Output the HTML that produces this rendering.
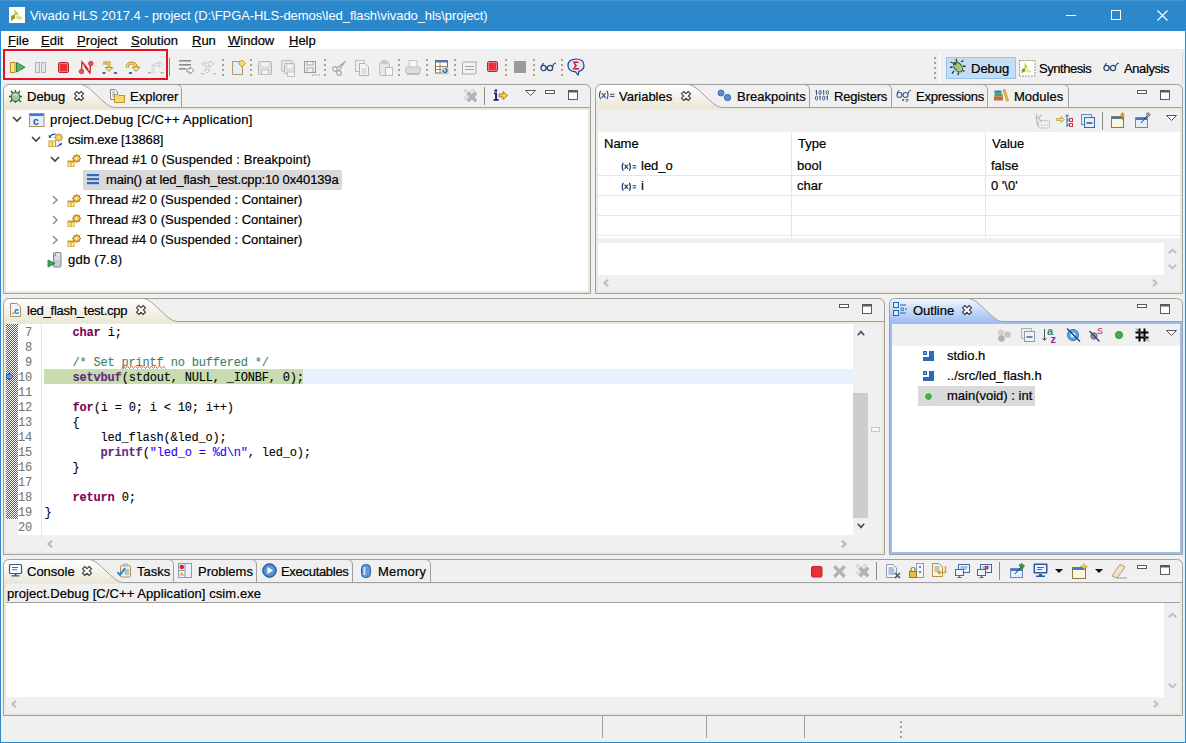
<!DOCTYPE html><html><head><meta charset="utf-8"><style>
html,body{margin:0;padding:0;width:1186px;height:743px;overflow:hidden;background:#f0f0f0;position:relative}
.a{position:absolute}
.t{position:absolute;z-index:3;-webkit-text-stroke:0.2px currentColor;font-family:"Liberation Sans",sans-serif;font-size:13px;line-height:15px;white-space:pre;color:#000}
.m{position:absolute;z-index:3;font-family:"Liberation Mono",monospace;font-size:12px;letter-spacing:-0.2px;-webkit-text-stroke:0.1px currentColor;line-height:15px;white-space:pre;color:#000}
svg{position:absolute;overflow:visible}
</style></head><body>
<div class="a" style="left:0px;top:0px;width:1186px;height:31px;background:#2b88cb"></div>
<div class="a" style="left:0px;top:0px;width:1186px;height:1px;background:#4596d2"></div>
<div class="a" style="left:0px;top:0px;width:1px;height:743px;background:#2b88cb"></div>
<div class="a" style="left:1185px;top:0px;width:1px;height:743px;background:#2b88cb"></div>
<div class="a" style="left:0px;top:742px;width:1186px;height:1px;background:#2b88cb"></div>
<div class="t" style="left:30px;top:8px;font-size:13px;color:#fff;-webkit-text-stroke:0;letter-spacing:-0.07px">Vivado HLS 2017.4 - project (D:\FPGA-HLS-demos\led_flash\vivado_hls\project)</div>
<div class="a" style="left:1px;top:31px;width:1184px;height:18px;background:#fff"></div>
<div class="t" style="left:8px;top:33px;font-size:13px;color:#000;"><u>F</u>ile</div>
<div class="t" style="left:41px;top:33px;font-size:13px;color:#000;"><u>E</u>dit</div>
<div class="t" style="left:77px;top:33px;font-size:13px;color:#000;"><u>P</u>roject</div>
<div class="t" style="left:131px;top:33px;font-size:13px;color:#000;"><u>S</u>olution</div>
<div class="t" style="left:192px;top:33px;font-size:13px;color:#000;"><u>R</u>un</div>
<div class="t" style="left:228px;top:33px;font-size:13px;color:#000;"><u>W</u>indow</div>
<div class="t" style="left:289px;top:33px;font-size:13px;color:#000;"><u>H</u>elp</div>
<div class="a" style="left:1px;top:83px;width:1184px;height:1px;background:#ece9d8"></div>
<svg class="a" style="left:3px;top:84px" width="588" height="210" viewBox="3 84 588 210"><defs><linearGradient id="g3_84" x1="0" y1="0" x2="0" y2="1"><stop offset="0" stop-color="#ffffff"/><stop offset="1" stop-color="#ebe7d6"/></linearGradient></defs><rect x="3" y="84" width="588" height="24" fill="#f0f0f0"/><path d="M3.5,108 L3.5,90.5 Q3.5,84.5 9.5,84.5 L81,84.5 C90,84.5 105,107.5 114,107.5 L114,108 Z" fill="url(#g3_84)"/><path d="M3.5,293.5 L3.5,90.5 Q3.5,84.5 9.5,84.5 L584.5,84.5 Q590.5,84.5 590.5,90.5 L590.5,293.5 Z" fill="none" stroke="#a0a0a0" stroke-width="1"/><path d="M81,84.5 C90,84.5 105,107.5 114,107.5 L590,107.5" fill="none" stroke="#a0a0a0" stroke-width="1"/><path d="M176,84.5 Q181.5,84.5 181.5,90 L181.5,107" fill="none" stroke="#a0a0a0" stroke-width="1"/><rect x="4" y="108" width="586" height="185" fill="none" stroke="#ece9d8" stroke-width="0"/></svg>
<div class="a" style="left:4px;top:108px;width:2px;height:185px;background:#ece9d8"></div>
<div class="a" style="left:588px;top:108px;width:2px;height:185px;background:#ece9d8"></div>
<div class="a" style="left:4px;top:291px;width:586px;height:2px;background:#ece9d8"></div>
<div class="a" style="left:6px;top:108px;width:582px;height:2px;background:#ece9d8"></div>
<svg class="a" style="left:595px;top:84px" width="588" height="210" viewBox="595 84 588 210"><defs><linearGradient id="g595_84" x1="0" y1="0" x2="0" y2="1"><stop offset="0" stop-color="#ffffff"/><stop offset="1" stop-color="#ebe7d6"/></linearGradient></defs><rect x="595" y="84" width="588" height="24" fill="#f0f0f0"/><path d="M595.5,108 L595.5,90.5 Q595.5,84.5 601.5,84.5 L688.5,84.5 C697.5,84.5 712.5,107.5 721.5,107.5 L721.5,108 Z" fill="url(#g595_84)"/><path d="M595.5,293.5 L595.5,90.5 Q595.5,84.5 601.5,84.5 L1176.5,84.5 Q1182.5,84.5 1182.5,90.5 L1182.5,293.5 Z" fill="none" stroke="#a0a0a0" stroke-width="1"/><path d="M688.5,84.5 C697.5,84.5 712.5,107.5 721.5,107.5 L1182,107.5" fill="none" stroke="#a0a0a0" stroke-width="1"/><path d="M804,84.5 Q809.5,84.5 809.5,90 L809.5,107" fill="none" stroke="#a0a0a0" stroke-width="1"/><path d="M886,84.5 Q891.5,84.5 891.5,90 L891.5,107" fill="none" stroke="#a0a0a0" stroke-width="1"/><path d="M982,84.5 Q987.5,84.5 987.5,90 L987.5,107" fill="none" stroke="#a0a0a0" stroke-width="1"/><path d="M1063,84.5 Q1068.5,84.5 1068.5,90 L1068.5,107" fill="none" stroke="#a0a0a0" stroke-width="1"/><rect x="596" y="108" width="586" height="185" fill="none" stroke="#ece9d8" stroke-width="0"/></svg>
<div class="a" style="left:596px;top:108px;width:2px;height:185px;background:#ece9d8"></div>
<div class="a" style="left:1180px;top:108px;width:2px;height:185px;background:#ece9d8"></div>
<div class="a" style="left:596px;top:291px;width:586px;height:2px;background:#ece9d8"></div>
<div class="a" style="left:598px;top:108px;width:582px;height:2px;background:#ece9d8"></div>
<svg class="a" style="left:3px;top:298px" width="882" height="257" viewBox="3 298 882 257"><defs><linearGradient id="g3_298" x1="0" y1="0" x2="0" y2="1"><stop offset="0" stop-color="#ffffff"/><stop offset="1" stop-color="#ebe7d6"/></linearGradient></defs><rect x="3" y="298" width="882" height="24" fill="#f0f0f0"/><path d="M3.5,322 L3.5,304.5 Q3.5,298.5 9.5,298.5 L143.5,298.5 C152.5,298.5 167.5,321.5 176.5,321.5 L176.5,322 Z" fill="url(#g3_298)"/><path d="M3.5,554.5 L3.5,304.5 Q3.5,298.5 9.5,298.5 L878.5,298.5 Q884.5,298.5 884.5,304.5 L884.5,554.5 Z" fill="none" stroke="#a0a0a0" stroke-width="1"/><path d="M143.5,298.5 C152.5,298.5 167.5,321.5 176.5,321.5 L884,321.5" fill="none" stroke="#a0a0a0" stroke-width="1"/><rect x="4" y="322" width="880" height="232" fill="none" stroke="#ece9d8" stroke-width="0"/></svg>
<div class="a" style="left:4px;top:322px;width:2px;height:232px;background:#ece9d8"></div>
<div class="a" style="left:882px;top:322px;width:2px;height:232px;background:#ece9d8"></div>
<div class="a" style="left:4px;top:552px;width:880px;height:2px;background:#ece9d8"></div>
<div class="a" style="left:6px;top:322px;width:876px;height:2px;background:#ece9d8"></div>
<svg class="a" style="left:889px;top:298px" width="294" height="257" viewBox="889 298 294 257"><defs><linearGradient id="g889_298" x1="0" y1="0" x2="0" y2="1"><stop offset="0" stop-color="#f2f7fe"/><stop offset="1" stop-color="#9ebff3"/></linearGradient></defs><rect x="889" y="298" width="294" height="24" fill="#f0f0f0"/><path d="M889.5,322 L889.5,304.5 Q889.5,298.5 895.5,298.5 L969,298.5 C978,298.5 993,321.5 1002,321.5 L1002,322 Z" fill="url(#g889_298)"/><path d="M889.5,554.5 L889.5,304.5 Q889.5,298.5 895.5,298.5 L1176.5,298.5 Q1182.5,298.5 1182.5,304.5 L1182.5,554.5 Z" fill="none" stroke="#a0a0a0" stroke-width="1"/><path d="M969,298.5 C978,298.5 993,321.5 1002,321.5 L1182,321.5" fill="none" stroke="#a0a0a0" stroke-width="1"/><rect x="890" y="322" width="292" height="232" fill="none" stroke="#99bdf4" stroke-width="0"/></svg>
<div class="a" style="left:890px;top:322px;width:2px;height:232px;background:#99bdf4"></div>
<div class="a" style="left:1180px;top:322px;width:2px;height:232px;background:#99bdf4"></div>
<div class="a" style="left:890px;top:552px;width:292px;height:2px;background:#99bdf4"></div>
<div class="a" style="left:892px;top:322px;width:288px;height:2px;background:#99bdf4"></div>
<svg class="a" style="left:3px;top:559px" width="1180" height="157" viewBox="3 559 1180 157"><defs><linearGradient id="g3_559" x1="0" y1="0" x2="0" y2="1"><stop offset="0" stop-color="#ffffff"/><stop offset="1" stop-color="#ebe7d6"/></linearGradient></defs><rect x="3" y="559" width="1180" height="24" fill="#f0f0f0"/><path d="M3.5,583 L3.5,565.5 Q3.5,559.5 9.5,559.5 L89.5,559.5 C98.5,559.5 113.5,582.5 122.5,582.5 L122.5,583 Z" fill="url(#g3_559)"/><path d="M3.5,715.5 L3.5,565.5 Q3.5,559.5 9.5,559.5 L1176.5,559.5 Q1182.5,559.5 1182.5,565.5 L1182.5,715.5 Z" fill="none" stroke="#a0a0a0" stroke-width="1"/><path d="M89.5,559.5 C98.5,559.5 113.5,582.5 122.5,582.5 L1182,582.5" fill="none" stroke="#a0a0a0" stroke-width="1"/><path d="M168,559.5 Q173.5,559.5 173.5,565 L173.5,582" fill="none" stroke="#a0a0a0" stroke-width="1"/><path d="M251,559.5 Q256.5,559.5 256.5,565 L256.5,582" fill="none" stroke="#a0a0a0" stroke-width="1"/><path d="M347,559.5 Q352.5,559.5 352.5,565 L352.5,582" fill="none" stroke="#a0a0a0" stroke-width="1"/><path d="M425,559.5 Q430.5,559.5 430.5,565 L430.5,582" fill="none" stroke="#a0a0a0" stroke-width="1"/><rect x="4" y="583" width="1178" height="132" fill="none" stroke="#ece9d8" stroke-width="0"/></svg>
<div class="a" style="left:4px;top:583px;width:2px;height:132px;background:#ece9d8"></div>
<div class="a" style="left:1180px;top:583px;width:2px;height:132px;background:#ece9d8"></div>
<div class="a" style="left:4px;top:713px;width:1178px;height:2px;background:#ece9d8"></div>
<div class="a" style="left:6px;top:583px;width:1174px;height:1px;background:#ece9d8"></div>
<div class="a" style="left:6px;top:110px;width:582px;height:181px;background:#fff"></div>
<div class="a" style="left:598px;top:132px;width:582px;height:106px;background:#fff"></div>
<div class="a" style="left:598px;top:243px;width:566px;height:32px;background:#fff"></div>
<div class="a" style="left:6px;top:324px;width:12px;height:195px;background-image:repeating-conic-gradient(#0a6fe0 0 25%, #fff 0 50%);background-size:2px 2px"></div>
<div class="a" style="left:6px;top:519px;width:12px;height:33px;background:#f0f0f0"></div>
<div class="a" style="left:18px;top:324px;width:23px;height:211px;background:#fff"></div>
<div class="a" style="left:41px;top:324px;width:1px;height:211px;background:#e8e8e8"></div>
<div class="a" style="left:42px;top:324px;width:811px;height:211px;background:#fff"></div>
<div class="a" style="left:892px;top:346px;width:288px;height:206px;background:#fff"></div>
<div class="a" style="left:6px;top:584px;width:1174px;height:18px;background:#f0f0f0"></div>
<div class="a" style="left:6px;top:602px;width:1174px;height:1px;background:#a0a0a0"></div>
<div class="a" style="left:6px;top:603px;width:1158px;height:94px;background:#fff"></div>
<div class="t" style="left:971px;top:61px;font-size:13px;color:#000;">Debug</div>
<div class="t" style="left:1039px;top:61px;font-size:13px;color:#000;letter-spacing:-0.45px">Synthesis</div>
<div class="t" style="left:1124px;top:61px;font-size:13px;color:#000;letter-spacing:-0.4px">Analysis</div>
<div class="t" style="left:27px;top:89px;font-size:13px;color:#000;">Debug</div>
<div class="t" style="left:130px;top:89px;font-size:13px;color:#000;">Explorer</div>
<div class="t" style="left:50px;top:112px;font-size:13px;color:#000;letter-spacing:0.2px">project.Debug [C/C++ Application]</div>
<div class="t" style="left:68px;top:132px;font-size:13px;color:#000;letter-spacing:-0.2px">csim.exe [13868]</div>
<div class="t" style="left:87px;top:152px;font-size:13px;color:#000;letter-spacing:0.08px">Thread #1 0 (Suspended : Breakpoint)</div>
<div class="a" style="left:83px;top:170px;width:259px;height:20px;background:#d9d9d9"></div>
<div class="t" style="left:106px;top:172px;font-size:13px;color:#000;letter-spacing:-0.15px">main() at led_flash_test.cpp:10 0x40139a</div>
<div class="t" style="left:87px;top:192px;font-size:13px;color:#000;">Thread #2 0 (Suspended : Container)</div>
<div class="t" style="left:87px;top:212px;font-size:13px;color:#000;">Thread #3 0 (Suspended : Container)</div>
<div class="t" style="left:87px;top:232px;font-size:13px;color:#000;">Thread #4 0 (Suspended : Container)</div>
<div class="t" style="left:68px;top:252px;font-size:13px;color:#000;letter-spacing:0.25px">gdb (7.8)</div>
<div class="t" style="left:619px;top:89px;font-size:13px;color:#000;">Variables</div>
<div class="t" style="left:737px;top:89px;font-size:13px;color:#000;">Breakpoints</div>
<div class="t" style="left:834px;top:89px;font-size:13px;color:#000;letter-spacing:-0.2px">Registers</div>
<div class="t" style="left:916px;top:89px;font-size:13px;color:#000;letter-spacing:-0.25px">Expressions</div>
<div class="t" style="left:1014px;top:89px;font-size:13px;color:#000;">Modules</div>
<div class="t" style="left:604px;top:136px;font-size:13px;color:#000;">Name</div>
<div class="t" style="left:798px;top:136px;font-size:13px;color:#000;">Type</div>
<div class="t" style="left:992px;top:136px;font-size:13px;color:#000;">Value</div>
<div class="t" style="left:641px;top:158px;font-size:13px;color:#000;">led_o</div>
<div class="t" style="left:797px;top:158px;font-size:13px;color:#000;">bool</div>
<div class="t" style="left:991px;top:158px;font-size:13px;color:#000;">false</div>
<div class="t" style="left:641px;top:178px;font-size:13px;color:#000;">i</div>
<div class="t" style="left:797px;top:178px;font-size:13px;color:#000;">char</div>
<div class="t" style="left:991px;top:178px;font-size:13px;color:#000;">0 '\0'</div>
<div class="t" style="left:27px;top:303px;font-size:13px;color:#000;letter-spacing:-0.25px">led_flash_test.cpp</div>
<div class="t" style="left:913px;top:303px;font-size:13px;color:#000;">Outline</div>
<div class="a" style="left:918px;top:386px;width:117px;height:20px;background:#d9d9d9"></div>
<div class="t" style="left:947px;top:348px;font-size:13px;color:#000;">stdio.h</div>
<div class="t" style="left:947px;top:368px;font-size:13px;color:#000;">../src/led_flash.h</div>
<div class="t" style="left:947px;top:388px;font-size:13px;color:#000;">main(void) : int</div>
<div class="t" style="left:27px;top:564px;font-size:13px;color:#000;">Console</div>
<div class="t" style="left:137px;top:564px;font-size:13px;color:#000;">Tasks</div>
<div class="t" style="left:198px;top:564px;font-size:13px;color:#000;">Problems</div>
<div class="t" style="left:281px;top:564px;font-size:13px;color:#000;letter-spacing:-0.3px">Executables</div>
<div class="t" style="left:378px;top:564px;font-size:13px;color:#000;letter-spacing:0.2px">Memory</div>
<div class="t" style="left:7px;top:586px;font-size:13px;color:#000;letter-spacing:0.08px">project.Debug [C/C++ Application] csim.exe</div>
<div class="a" style="left:303px;top:369px;width:550px;height:15px;background:#e8f2fe"></div>
<div class="a" style="left:44px;top:369px;width:259px;height:15px;background:#c7ddb0"></div>
<div class="m" style="left:18px;top:326px;width:14px;text-align:right;color:#787878">7</div>
<div class="m" style="left:44.6px;top:326px">    <span style="color:#7f0055;font-weight:bold">char</span> i;</div>
<div class="m" style="left:18px;top:341px;width:14px;text-align:right;color:#787878">8</div>
<div class="m" style="left:18px;top:356px;width:14px;text-align:right;color:#787878">9</div>
<div class="m" style="left:44.6px;top:356px">    <span style="color:#3f7f5f">/* Set printf no buffered */</span></div>
<div class="m" style="left:18px;top:371px;width:14px;text-align:right;color:#787878">10</div>
<div class="m" style="left:44.6px;top:371px">    <span style="color:#642880;font-weight:bold">setvbuf</span>(stdout, NULL, _IONBF, 0);</div>
<div class="m" style="left:18px;top:386px;width:14px;text-align:right;color:#787878">11</div>
<div class="m" style="left:18px;top:401px;width:14px;text-align:right;color:#787878">12</div>
<div class="m" style="left:44.6px;top:401px">    <span style="color:#7f0055;font-weight:bold">for</span>(i = 0; i &lt; 10; i++)</div>
<div class="m" style="left:18px;top:416px;width:14px;text-align:right;color:#787878">13</div>
<div class="m" style="left:44.6px;top:416px">    {</div>
<div class="m" style="left:18px;top:431px;width:14px;text-align:right;color:#787878">14</div>
<div class="m" style="left:44.6px;top:431px">        led_flash(&amp;led_o);</div>
<div class="m" style="left:18px;top:446px;width:14px;text-align:right;color:#787878">15</div>
<div class="m" style="left:44.6px;top:446px">        <span style="color:#642880;font-weight:bold">printf</span>(<span style="color:#2a00ff">"led_o = %d\n"</span>, led_o);</div>
<div class="m" style="left:18px;top:461px;width:14px;text-align:right;color:#787878">16</div>
<div class="m" style="left:44.6px;top:461px">    }</div>
<div class="m" style="left:18px;top:476px;width:14px;text-align:right;color:#787878">17</div>
<div class="m" style="left:18px;top:491px;width:14px;text-align:right;color:#787878">18</div>
<div class="m" style="left:44.6px;top:491px">    <span style="color:#7f0055;font-weight:bold">return</span> 0;</div>
<div class="m" style="left:18px;top:506px;width:14px;text-align:right;color:#787878">19</div>
<div class="m" style="left:44.6px;top:506px">}</div>
<div class="m" style="left:18px;top:521px;width:14px;text-align:right;color:#787878">20</div>
<svg class="a" style="left:9px;top:7px" width="16" height="16" viewBox="0 0 16 16"><rect width="16" height="16" fill="#fff"/><path d="M5,2 L9,6 L9,8 L6,8 Z" fill="#c9c743"/><path d="M2,14 L6,8 L6,11 Z" fill="#8d8b1f"/><path d="M2,14 L2,9 L6,7 L6,11 Z" fill="#9c9a25"/><path d="M6,11 L9,8 L14,11 L10,13 Z" fill="#dbe08a"/></svg>
<div class="a" style="left:1066px;top:15px;width:10px;height:1px;background:#fff"></div>
<div class="a" style="left:1111px;top:10px;width:10px;height:10px;border:1px solid #fff;box-sizing:border-box"></div>
<svg class="a" style="left:1157px;top:10px" width="11" height="11" viewBox="0 0 11 11"><path d="M0.5,0.5 L10.5,10.5 M10.5,0.5 L0.5,10.5" stroke="#fff" stroke-width="1.1"/></svg>
<div class="a" style="left:3px;top:49px;width:165px;height:31px;border:2px solid #e81123;box-sizing:border-box"></div>
<svg class="a" style="left:10px;top:62px" width="16" height="11" viewBox="0 0 16 11"><rect x="0.5" y="0.5" width="4.5" height="10" fill="#f7e58a" stroke="#b48f1e"/><path d="M6.5,0.5 L15,5.3 L6.5,10 Z" fill="#5cb85c" stroke="#2e7d4a"/></svg>
<svg class="a" style="left:35px;top:62px" width="11" height="11" viewBox="0 0 11 11"><rect x="0.5" y="0.5" width="4" height="10" fill="#e6e6e6" stroke="#b3b3b3"/><rect x="6.5" y="0.5" width="4" height="10" fill="#e6e6e6" stroke="#b3b3b3"/></svg>
<svg class="a" style="left:58px;top:62px" width="11" height="11" viewBox="0 0 11 11"><rect x="0.5" y="0.5" width="10" height="10" rx="1.5" fill="#e8303a" stroke="#c8202a"/><rect x="1.5" y="1.5" width="8" height="8" fill="none" stroke="#f58a90" stroke-width="0.8"/></svg>
<svg class="a" style="left:79px;top:60px" width="15" height="15" viewBox="0 0 15 15"><path d="M2.5,10.5 L3,2 L8,8 L6.5,7.5 L11,13 L11.5,4" fill="none" stroke="#c8202a" stroke-width="1.3"/><circle cx="2.5" cy="11.5" r="2.3" fill="#f0505a" stroke="#c8202a" stroke-width="0.7"/><circle cx="11.8" cy="3.5" r="2.3" fill="#f0505a" stroke="#c8202a" stroke-width="0.7"/></svg>
<svg class="a" style="left:102px;top:61px" width="16" height="13" viewBox="0 0 16 13"><path d="M1,2 L7,2 L7,6.5" fill="none" stroke="#b48f1e" stroke-width="3"/><path d="M1,2 L7,2 L7,6.5" fill="none" stroke="#fbe59a" stroke-width="1.2"/><path d="M3.2,6.5 L10.8,6.5 L7,10.5 Z" fill="#fbe59a" stroke="#b48f1e"/><ellipse cx="2" cy="12" rx="1.8" ry="1.1" fill="#2f5a9a"/><ellipse cx="13.5" cy="12" rx="1.8" ry="1.1" fill="#2f5a9a"/></svg>
<svg class="a" style="left:125px;top:61px" width="16" height="13" viewBox="0 0 16 13"><path d="M2,7 C2,0.5 11,0.5 11,6" fill="none" stroke="#b48f1e" stroke-width="3"/><path d="M2,7 C2,0.5 11,0.5 11,6" fill="none" stroke="#fbe59a" stroke-width="1.2"/><path d="M7.2,6 L14.8,6 L11,10.5 Z" fill="#fbe59a" stroke="#b48f1e"/><ellipse cx="5.5" cy="12" rx="1.8" ry="1.1" fill="#2f5a9a"/></svg>
<svg class="a" style="left:148px;top:61px" width="16" height="13" viewBox="0 0 16 13"><path d="M5,12 L5,6 C5,4 7,3.5 9,3.5 L11,3.5" fill="none" stroke="#c8c8c8" stroke-width="2.6"/><path d="M5,12 L5,6 C5,4 7,3.5 9,3.5 L11,3.5" fill="none" stroke="#f6f6f6" stroke-width="1"/><path d="M11,0.5 L15,3.5 L11,6.5 Z" fill="#f6f6f6" stroke="#c8c8c8"/><rect x="0" y="11" width="3" height="1.5" fill="#b0b0b0"/><rect x="12.5" y="11" width="3" height="1.5" fill="#b0b0b0"/></svg>
<div class="a" style="left:169px;top:58px;width:1px;height:18px;background:#8c8c8c"></div>
<svg class="a" style="left:179px;top:60px" width="16" height="16" viewBox="0 0 16 16"><rect x="0" y="0" width="12" height="1.6" fill="#8e8e8e"/><rect x="0" y="4" width="12" height="1.6" fill="#8e8e8e"/><rect x="0" y="8" width="7" height="1.6" fill="#8e8e8e"/><path d="M8,9 L11,9 L11,7 L15,10.5 L11,14 L11,12 L8,12 Z" fill="#fff" stroke="#8e8e8e"/></svg>
<svg class="a" style="left:201px;top:60px" width="16" height="16" viewBox="0 0 16 16"><path d="M1,3 L9,3 L9,1 L13,4 L9,7 L9,5 L7,5 L7,10 L9,10 L6,13 L3,10 L5,10 L5,5 L1,5 Z" fill="#f8f8f8" stroke="#c4c4c4"/><rect x="0" y="13" width="3" height="1.4" fill="#bbb"/><rect x="12" y="13" width="3" height="1.4" fill="#bbb"/></svg>
<svg class="a" style="left:222px;top:59px" width="2" height="17" viewBox="0 0 2 17"><rect x="0" y="0" width="2" height="2" fill="#a8a390"/><rect x="0" y="5" width="2" height="2" fill="#a8a390"/><rect x="0" y="10" width="2" height="2" fill="#a8a390"/><rect x="0" y="15" width="2" height="2" fill="#a8a390"/></svg>
<svg class="a" style="left:232px;top:60px" width="14" height="16" viewBox="0 0 14 16"><path d="M0.5,1.5 L8,1.5 L10.5,4 L10.5,14.5 L0.5,14.5 Z" fill="#e4eefb" stroke="#b49a5a"/><path d="M10,0 L13.5,3.5 L10,7 L6.5,3.5 Z" fill="#f5d96a" stroke="#b48f1e" stroke-width="0.8"/></svg>
<svg class="a" style="left:250px;top:59px" width="2" height="17" viewBox="0 0 2 17"><rect x="0" y="0" width="2" height="2" fill="#a8a390"/><rect x="0" y="5" width="2" height="2" fill="#a8a390"/><rect x="0" y="10" width="2" height="2" fill="#a8a390"/><rect x="0" y="15" width="2" height="2" fill="#a8a390"/></svg>
<svg class="a" style="left:258px;top:61px" width="15" height="15" viewBox="0 0 15 15"><rect x="0.5" y="0.5" width="13" height="13" rx="1" fill="#e3e3e3" stroke="#b8b8b8"/><rect x="3" y="1" width="8" height="5" fill="#f4f4f4" stroke="#c8c8c8" stroke-width="0.6"/><rect x="3.5" y="9" width="7" height="4.5" fill="#f4f4f4" stroke="#b8b8b8" stroke-width="0.8"/></svg>
<svg class="a" style="left:281px;top:60px" width="16" height="16" viewBox="0 0 16 16"><g transform="translate(0,0) scale(0.85)"><rect x="0.5" y="0.5" width="13" height="13" rx="1" fill="#e3e3e3" stroke="#b8b8b8"/></g><g transform="translate(3,3)"><rect x="0.5" y="0.5" width="10" height="10" rx="1" fill="#e3e3e3" stroke="#b8b8b8"/><rect x="3" y="1" width="6" height="5" fill="#f4f4f4" stroke="#c8c8c8" stroke-width="0.6"/><rect x="3.5" y="9" width="7" height="4.5" fill="#f4f4f4" stroke="#b8b8b8" stroke-width="0.8"/></g></svg>
<svg class="a" style="left:304px;top:61px" width="16" height="16" viewBox="0 0 16 16"><rect x="0.5" y="0.5" width="11" height="11" fill="none" stroke="#999" stroke-width="1"/><rect x="3" y="7" width="6" height="4.5" fill="none" stroke="#999" stroke-width="0.8"/><rect x="3" y="0.5" width="6" height="3.5" fill="none" stroke="#999" stroke-width="0.8"/><path d="M8,14 h2 M11,14 h2 M14,14 h2" stroke="#999" stroke-width="1"/></svg>
<svg class="a" style="left:324px;top:59px" width="2" height="17" viewBox="0 0 2 17"><rect x="0" y="0" width="2" height="2" fill="#a8a390"/><rect x="0" y="5" width="2" height="2" fill="#a8a390"/><rect x="0" y="10" width="2" height="2" fill="#a8a390"/><rect x="0" y="15" width="2" height="2" fill="#a8a390"/></svg>
<svg class="a" style="left:332px;top:60px" width="15" height="16" viewBox="0 0 15 16"><circle cx="3" cy="9" r="2.3" fill="none" stroke="#a8a8a8" stroke-width="1.2"/><circle cx="7" cy="13" r="2.3" fill="none" stroke="#a8a8a8" stroke-width="1.2"/><path d="M5,8 L14,1 M7,10.5 L12,3" stroke="#a8a8a8" stroke-width="1.3"/></svg>
<svg class="a" style="left:355px;top:60px" width="15" height="16" viewBox="0 0 15 16"><rect x="0.5" y="0.5" width="9" height="11" fill="#f0f0f0" stroke="#bdbdbd"/><path d="M4.5,3.5 L10,3.5 L13.5,7 L13.5,15.5 L4.5,15.5 Z" fill="#f4f4f4" stroke="#b3b3b3"/><path d="M6.5,9 h5 M6.5,11 h5 M6.5,13 h5" stroke="#c0c0c0" stroke-width="0.9"/></svg>
<svg class="a" style="left:379px;top:60px" width="14" height="16" viewBox="0 0 14 16"><rect x="0.5" y="2.5" width="10" height="13" rx="1" fill="#e6e6e6" stroke="#c0c0c0"/><rect x="3" y="0.5" width="5" height="3" fill="#d0d0d0" stroke="#c0c0c0" stroke-width="0.8"/><rect x="6.5" y="7.5" width="7" height="8" fill="#f6f6f6" stroke="#bdbdbd"/></svg>
<svg class="a" style="left:398px;top:59px" width="2" height="17" viewBox="0 0 2 17"><rect x="0" y="0" width="2" height="2" fill="#a8a390"/><rect x="0" y="5" width="2" height="2" fill="#a8a390"/><rect x="0" y="10" width="2" height="2" fill="#a8a390"/><rect x="0" y="15" width="2" height="2" fill="#a8a390"/></svg>
<svg class="a" style="left:405px;top:60px" width="16" height="16" viewBox="0 0 16 16"><rect x="4" y="0.5" width="8" height="7" fill="#f6f6f6" stroke="#c4c4c4"/><rect x="0.5" y="7" width="15" height="6.5" rx="2" fill="#dcdcdc" stroke="#c0c0c0"/><rect x="2" y="13" width="12" height="2" fill="#bcbcbc"/></svg>
<svg class="a" style="left:426px;top:59px" width="2" height="17" viewBox="0 0 2 17"><rect x="0" y="0" width="2" height="2" fill="#a8a390"/><rect x="0" y="5" width="2" height="2" fill="#a8a390"/><rect x="0" y="10" width="2" height="2" fill="#a8a390"/><rect x="0" y="15" width="2" height="2" fill="#a8a390"/></svg>
<svg class="a" style="left:435px;top:60px" width="14" height="15" viewBox="0 0 14 15"><rect x="0.5" y="0.5" width="12" height="12.5" fill="#fff" stroke="#8b6b2b"/><rect x="0.5" y="0.5" width="12" height="2" fill="#3d78c9"/><path d="M5,3 V13 M1,6.5 H12 M1,9.5 H6" stroke="#8b6b2b" stroke-width="0.8"/><rect x="6.5" y="7.5" width="7" height="7" fill="#a8d4f4"/><path d="M8,10.5 A2,2 0 1 0 10,8.5" fill="none" stroke="#333" stroke-width="1"/></svg>
<svg class="a" style="left:454px;top:59px" width="2" height="17" viewBox="0 0 2 17"><rect x="0" y="0" width="2" height="2" fill="#a8a390"/><rect x="0" y="5" width="2" height="2" fill="#a8a390"/><rect x="0" y="10" width="2" height="2" fill="#a8a390"/><rect x="0" y="15" width="2" height="2" fill="#a8a390"/></svg>
<svg class="a" style="left:462px;top:61px" width="15" height="14" viewBox="0 0 15 14"><path d="M0.5,1.5 L2,0.5 L4,1.5 L6,0.5 L8,1.5 L10,0.5 L12,1.5 L14,0.5 L14,12.5 L12,13.5 L10,12.5 L8,13.5 L6,12.5 L4,13.5 L2,12.5 L0.5,13.5 Z" fill="#f2f2f2" stroke="#a8a8a8"/><path d="M3,5.5 h9 M3,8.5 h9" stroke="#a0a0a0"/></svg>
<svg class="a" style="left:487px;top:61px" width="11" height="11" viewBox="0 0 11 11"><rect x="0.5" y="0.5" width="10" height="10" rx="1.5" fill="#e8303a" stroke="#c8202a"/><rect x="1.5" y="1.5" width="8" height="8" fill="none" stroke="#f58a90" stroke-width="0.8"/></svg>
<svg class="a" style="left:505px;top:59px" width="2" height="17" viewBox="0 0 2 17"><rect x="0" y="0" width="2" height="2" fill="#a8a390"/><rect x="0" y="5" width="2" height="2" fill="#a8a390"/><rect x="0" y="10" width="2" height="2" fill="#a8a390"/><rect x="0" y="15" width="2" height="2" fill="#a8a390"/></svg>
<div class="a" style="left:514px;top:61px;width:12px;height:12px;background:#9b9b9b"></div>
<svg class="a" style="left:533px;top:59px" width="2" height="17" viewBox="0 0 2 17"><rect x="0" y="0" width="2" height="2" fill="#a8a390"/><rect x="0" y="5" width="2" height="2" fill="#a8a390"/><rect x="0" y="10" width="2" height="2" fill="#a8a390"/><rect x="0" y="15" width="2" height="2" fill="#a8a390"/></svg>
<svg class="a" style="left:540px;top:62px" width="17" height="10" viewBox="0 0 17 10"><circle cx="3.5" cy="6" r="2.6" fill="none" stroke="#28497a" stroke-width="1.3"/><circle cx="10" cy="6" r="2.6" fill="none" stroke="#28497a" stroke-width="1.3"/><path d="M6,6 Q6.8,4.5 7.5,6 M1,5 L3.5,1 M12.5,5 Q13,1.5 16,1" fill="none" stroke="#28497a" stroke-width="1.2"/></svg>
<svg class="a" style="left:561px;top:59px" width="2" height="17" viewBox="0 0 2 17"><rect x="0" y="0" width="2" height="2" fill="#a8a390"/><rect x="0" y="5" width="2" height="2" fill="#a8a390"/><rect x="0" y="10" width="2" height="2" fill="#a8a390"/><rect x="0" y="15" width="2" height="2" fill="#a8a390"/></svg>
<svg class="a" style="left:567px;top:58px" width="18" height="18" viewBox="0 0 18 18"><path d="M9,1 C14,1 17,3.5 17,7.5 C17,10.5 15,12.5 12,13.3 L11,17 L8.5,13.8 C4,13.5 1,11 1,7.5 C1,3.5 4,1 9,1 Z" fill="#dbe8f6" stroke="#1f3f9a" stroke-width="1.2"/><path d="M5.5,3.5 L11.5,3.5 L11.5,5 L8,5 L10,7.5 L8,10 L12,10 L12,11.5 L5.5,11.5 L8,7.5 Z" fill="#e8101a"/></svg>
<svg class="a" style="left:934px;top:57px" width="2" height="21" viewBox="0 0 2 21"><rect x="0" y="0" width="2" height="2" fill="#a8a390"/><rect x="0" y="5" width="2" height="2" fill="#a8a390"/><rect x="0" y="10" width="2" height="2" fill="#a8a390"/><rect x="0" y="15" width="2" height="2" fill="#a8a390"/><rect x="0" y="20" width="2" height="2" fill="#a8a390"/></svg>
<div class="a" style="left:939px;top:52px;width:1px;height:31px;background:#fff"></div>
<div class="a" style="left:946px;top:57px;width:70px;height:22px;background:#c4ddf3;border:1px solid #94c4ee;box-sizing:border-box"></div>
<svg class="a" style="left:8px;top:89px" width="15" height="15" viewBox="0 0 15 15"><path d="M7.5,1 L7.5,3 M3,2 L5,4.5 M12,2 L10,4.5 M1,7.5 L3.5,7.5 M14,7.5 L11.5,7.5 M2,13 L4.5,10.5 M13,13 L10.5,10.5 M7.5,14 L7.5,12" stroke="#2d5a3a" stroke-width="1.3"/><ellipse cx="7.5" cy="7.8" rx="4.3" ry="4.6" fill="#9cc99a" stroke="#3b6e4a" stroke-width="1.1"/><path d="M5.5,6 Q7.5,5 9.5,7" stroke="#e3f3df" stroke-width="1" fill="none"/></svg>
<svg class="a" style="left:74px;top:91px" width="10" height="10" viewBox="0 0 10 10"><path d="M0.5,2.8 L2.8,0.5 L5,2.7 L7.2,0.5 L9.5,2.8 L7.3,5 L9.5,7.2 L7.2,9.5 L5,7.3 L2.8,9.5 L0.5,7.2 L2.7,5 Z" fill="#fff" stroke="#3c3c3c" stroke-width="1.1" stroke-linejoin="miter"/></svg>
<svg class="a" style="left:110px;top:89px" width="16" height="14" viewBox="0 0 16 14"><path d="M0.5,0.5 L5,0.5 L7.5,3 L7.5,10.5 L0.5,10.5 Z" fill="#f4f6fa" stroke="#8a8a8a"/><path d="M2,3 h3 M2,5 h3 M2,7 h3" stroke="#6a8ac0" stroke-width="0.8"/><path d="M4.5,5.5 L8,5.5 L9,6.5 L14.5,6.5 L14.5,13.5 L4.5,13.5 Z" fill="#f7d978" stroke="#c0902a"/></svg>
<svg class="a" style="left:463px;top:88px" width="16" height="16" viewBox="0 0 16 16"><path d="M1,3 L3,1 L6.5,4.5 L10,1 L12,3 L8.5,6.5 L12,10 L10,12 L6.5,8.5 L3,12 L1,10 L4.5,6.5 Z" fill="#e6e6e6" stroke="#c8c8c8" stroke-width="0.8"/><path d="M4,6 L6,4 L9,7 L12,4 L14,6 L11,9 L14,12 L12,14 L9,11 L6,14 L4,12 L7,9 Z" fill="#b4b4b4" stroke="#a0a0a0" stroke-width="0.6"/></svg>
<div class="a" style="left:484px;top:87px;width:1px;height:18px;background:#8c8c8c"></div>
<svg class="a" style="left:492px;top:89px" width="17" height="13" viewBox="0 0 17 13"><path d="M2,3.5 h3 v6.5 h1.6 v1.8 h-5 v-1.8 h1.5 v-4.8 h-1.1 Z" fill="#1a1a8a"/><rect x="2.5" y="0.5" width="2.6" height="2.2" fill="#1a1a8a"/><path d="M7,5 L11,5 L11,2.5 L15.5,6.5 L11,10.5 L11,8 L7,8 Z" fill="#e8d84a" stroke="#9a7a1a" stroke-width="0.9"/></svg>
<svg class="a" style="left:525px;top:90px" width="11" height="6" viewBox="0 0 11 6"><path d="M0.5,0.5 L10.5,0.5 L5.5,5.5 Z" fill="#fff" stroke="#555" stroke-width="1"/></svg>
<svg class="a" style="left:545px;top:90px" width="10" height="4" viewBox="0 0 10 4"><rect x="0.5" y="0.5" width="9" height="3" fill="#fff" stroke="#5a5a5a"/></svg>
<svg class="a" style="left:568px;top:90px" width="10" height="10" viewBox="0 0 10 10"><rect x="0.5" y="0.5" width="9" height="9" fill="#fff" stroke="#5a5a5a"/><rect x="1" y="1" width="8" height="1.5" fill="#5a5a5a"/></svg>
<svg class="a" style="left:598px;top:90px" width="18" height="11" viewBox="0 0 18 11"><path d="M2.6,0.8 Q0.4,5 2.6,9.2 M8.9,0.8 Q11.1,5 8.9,9.2" fill="none" stroke="#2f4f80" stroke-width="1.1"/><path d="M3.8,3 L7.6,7.8 M7.6,3 L3.8,7.8" stroke="#2f4f80" stroke-width="1.15"/><path d="M12,4.3 h4.5 M12,6.4 h4.5" stroke="#2f4f80" stroke-width="1"/></svg>
<svg class="a" style="left:681px;top:91px" width="10" height="10" viewBox="0 0 10 10"><path d="M0.5,2.8 L2.8,0.5 L5,2.7 L7.2,0.5 L9.5,2.8 L7.3,5 L9.5,7.2 L7.2,9.5 L5,7.3 L2.8,9.5 L0.5,7.2 L2.7,5 Z" fill="#fff" stroke="#3c3c3c" stroke-width="1.1" stroke-linejoin="miter"/></svg>
<svg class="a" style="left:717px;top:89px" width="15" height="13" viewBox="0 0 15 13"><circle cx="4" cy="4" r="3" fill="#5b8fc8" stroke="#2f5f9a" stroke-width="0.8"/><circle cx="10.5" cy="8.5" r="3.2" fill="#5b8fc8" stroke="#2f5f9a" stroke-width="0.8"/></svg>
<svg class="a" style="left:815px;top:90px" width="15" height="11" viewBox="0 0 15 11"><path d="M1.5,0.3 V4.7 M0.5,1.2 L1.5,0.3" stroke="#2f4f80" stroke-width="1" fill="none"/><ellipse cx="5.1" cy="2.5" rx="1.15" ry="2" fill="none" stroke="#2f4f80" stroke-width="0.9"/><path d="M8.7,0.3 V4.7 M7.7,1.2 L8.7,0.3" stroke="#2f4f80" stroke-width="1" fill="none"/><ellipse cx="12.3" cy="2.5" rx="1.15" ry="2" fill="none" stroke="#2f4f80" stroke-width="0.9"/><ellipse cx="1.5" cy="8.1" rx="1.15" ry="2" fill="none" stroke="#2f4f80" stroke-width="0.9"/><path d="M5.1,5.8999999999999995 V10.3 M4.1,6.8 L5.1,5.8999999999999995" stroke="#2f4f80" stroke-width="1" fill="none"/><ellipse cx="8.7" cy="8.1" rx="1.15" ry="2" fill="none" stroke="#2f4f80" stroke-width="0.9"/><path d="M12.3,5.8999999999999995 V10.3 M11.3,6.8 L12.3,5.8999999999999995" stroke="#2f4f80" stroke-width="1" fill="none"/></svg>
<svg class="a" style="left:896px;top:89px" width="16" height="13" viewBox="0 0 16 13"><circle cx="3.5" cy="6" r="2.5" fill="none" stroke="#3a5a8a" stroke-width="1.1"/><circle cx="9.5" cy="6" r="2.5" fill="none" stroke="#3a5a8a" stroke-width="1.1"/><path d="M6,5.5 Q6.5,4.5 7,5.5 M1,4.5 L3,1 M12,5 Q12.5,1.5 15,1" fill="none" stroke="#3a5a8a" stroke-width="1"/><path d="M6,10 l2,2 M8,10 l-2,2 M9.5,10.5 h3 M9.5,12 h3" stroke="#3a5a8a" stroke-width="0.8"/></svg>
<svg class="a" style="left:994px;top:89px" width="15" height="13" viewBox="0 0 15 13"><rect x="0.5" y="1.5" width="7" height="3" fill="#3d7cc9"/><rect x="0.5" y="4.5" width="8" height="3" fill="#4aa05a"/><rect x="0" y="7.5" width="9" height="4" fill="#c26a3a"/><path d="M9,1 L11,0.5 L14.5,11.5 L12.5,12 Z" fill="#f0c040" stroke="#b08020" stroke-width="0.6"/></svg>
<svg class="a" style="left:1137px;top:90px" width="10" height="4" viewBox="0 0 10 4"><rect x="0.5" y="0.5" width="9" height="3" fill="#fff" stroke="#5a5a5a"/></svg>
<svg class="a" style="left:1160px;top:90px" width="10" height="10" viewBox="0 0 10 10"><rect x="0.5" y="0.5" width="9" height="9" fill="#fff" stroke="#5a5a5a"/><rect x="1" y="1" width="8" height="1.5" fill="#5a5a5a"/></svg>
<svg class="a" style="left:1034px;top:113px" width="17" height="16" viewBox="0 0 17 16"><path d="M3,1 Q1,5 4,13 M2,6 L8,2 M7,9 L4,4" stroke="#b8b8b8" stroke-width="1.1" fill="none"/><rect x="4.5" y="7.5" width="11" height="7.5" rx="1" fill="none" stroke="#c8c8c8"/><path d="M7,12 h1 M10,12 h1 M13,12 h1" stroke="#aaa"/></svg>
<svg class="a" style="left:1056px;top:114px" width="18" height="15" viewBox="0 0 18 15"><path d="M0.5,4.5 L5,4.5 L5,2.5 L8.5,5.5 L5,8.5 L5,6.5 L0.5,6.5 Z" fill="#f2df80" stroke="#b89a30" stroke-width="0.8"/><path d="M11,1 L11,13 M11,6 h3 M11,11 h3" stroke="#3a5a8a" stroke-width="1"/><path d="M9.5,2.5 L11,0.5 L12.5,2.5" fill="none" stroke="#3a5a8a" stroke-width="0.8"/><rect x="13.5" y="4.5" width="3" height="3" fill="none" stroke="#d03040"/><rect x="13.5" y="9.5" width="3" height="3" fill="none" stroke="#d03040"/></svg>
<svg class="a" style="left:1081px;top:114px" width="14" height="14" viewBox="0 0 14 14"><rect x="0.5" y="0.5" width="10" height="10" fill="#e4eef8" stroke="#6a8ab8"/><rect x="3.5" y="3.5" width="10" height="10" fill="#e4eef8" stroke="#3a6aa8"/><path d="M5.5,9 h6" stroke="#1a3a6a" stroke-width="1.3"/></svg>
<div class="a" style="left:1102px;top:112px;width:1px;height:18px;background:#8c8c8c"></div>
<svg class="a" style="left:1111px;top:112px" width="16" height="17" viewBox="0 0 16 17"><rect x="0.5" y="4.5" width="12" height="11" fill="#fdf6da" stroke="#8a7a4a"/><rect x="1" y="5" width="11" height="2" fill="#3d78c9"/><path d="M11.5,1 L11.5,8 M9.5,3.5 L11.5,1 L13.5,3.5" stroke="#c09020" stroke-width="1.2" fill="none"/></svg>
<svg class="a" style="left:1135px;top:112px" width="16" height="17" viewBox="0 0 16 17"><rect x="0.5" y="5.5" width="12" height="10" fill="#e4f0fa" stroke="#6a8ab8"/><rect x="1" y="6" width="11" height="2" fill="#3d78c9"/><path d="M6,11 L12,4" stroke="#1a3a6a" stroke-width="1"/><path d="M11,2 L13.5,0.5 L15.5,3 L13,5 Z" fill="#9a9a9a" stroke="#666" stroke-width="0.6"/></svg>
<svg class="a" style="left:1166px;top:115px" width="11" height="6" viewBox="0 0 11 6"><path d="M0.5,0.5 L10.5,0.5 L5.5,5.5 Z" fill="#fff" stroke="#555" stroke-width="1"/></svg>
<svg class="a" style="left:12px;top:116px" width="10" height="7" viewBox="0 0 10 7"><path d="M1,1 L5,5 L9,1" fill="none" stroke="#404040" stroke-width="1.6"/></svg>
<svg class="a" style="left:29px;top:113px" width="16" height="14" viewBox="0 0 16 14"><rect x="0.5" y="0.5" width="14.5" height="13" fill="#e2eefa" stroke="#a89060"/><rect x="1" y="1" width="13.5" height="2" fill="#3d78c9"/><text x="4" y="12" font-family="Liberation Sans" font-weight="bold" font-size="10.5" fill="#2a5a98">c</text></svg>
<svg class="a" style="left:31px;top:136px" width="10" height="7" viewBox="0 0 10 7"><path d="M1,1 L5,5 L9,1" fill="none" stroke="#404040" stroke-width="1.6"/></svg>
<svg class="a" style="left:47px;top:133px" width="16" height="15" viewBox="0 0 16 15"><rect x="1.5" y="7.5" width="7.5" height="6.5" fill="#c8a020"/><rect x="2.5" y="8.3" width="2.2" height="5" fill="#fbeaa0"/><rect x="5.8" y="8.3" width="2.2" height="5" fill="#fbeaa0"/><path d="M11.6,0.3 L12.6,2 L14.4,1.6 L14.3,3.5 L16,4.5 L14.3,5.5 L14.4,7.4 L12.6,7 L11.6,8.7 L10.6,7 L8.8,7.4 L8.9,5.5 L7.2,4.5 L8.9,3.5 L8.8,1.6 L10.6,2 Z" fill="#fcc840" stroke="#9a7040" stroke-width="0.7"/><circle cx="11.6" cy="4.5" r="0.9" fill="#eee"/><path d="M8.5,1.2 Q5,1 3.2,3.2" fill="none" stroke="#1a4f9a" stroke-width="1.2"/><path d="M1.5,1.8 L2,5 L5,4.6 Z" fill="#1a4f9a"/><path d="M9.5,13.5 Q12,13 13.3,11" fill="none" stroke="#1a4f9a" stroke-width="1.2"/><path d="M15,9.5 L14.3,12.8 L11.6,11.2 Z" fill="#1a4f9a"/></svg>
<svg class="a" style="left:50px;top:156px" width="10" height="7" viewBox="0 0 10 7"><path d="M1,1 L5,5 L9,1" fill="none" stroke="#404040" stroke-width="1.6"/></svg>
<svg class="a" style="left:67px;top:154px" width="14" height="13" viewBox="0 0 14 13"><rect x="0.5" y="6.5" width="7" height="6.5" fill="#c8a020"/><rect x="1.3" y="8.5" width="2.2" height="4" fill="#fbeaa0"/><rect x="4.5" y="8.5" width="2.2" height="4" fill="#fbeaa0"/><path d="M9.6,0.3 L10.6,2 L12.4,1.6 L12.3,3.5 L14,4.5 L12.3,5.5 L12.4,7.4 L10.6,7 L9.6,8.7 L8.6,7 L6.8,7.4 L6.9,5.5 L5.2,4.5 L6.9,3.5 L6.8,1.6 L8.6,2 Z" fill="#fcc840" stroke="#8a5a30" stroke-width="0.8"/><circle cx="9.6" cy="4.5" r="1" fill="#fff"/></svg>
<svg class="a" style="left:87px;top:174px" width="13" height="11" viewBox="0 0 13 11"><rect x="0" y="0" width="12" height="2.2" fill="#2f6ab8"/><rect x="0" y="4" width="12" height="2.2" fill="#2f6ab8"/><rect x="0" y="8" width="12" height="2.2" fill="#2f6ab8"/></svg>
<svg class="a" style="left:52px;top:195px" width="7" height="10" viewBox="0 0 7 10"><path d="M1,1 L5,5 L1,9" fill="none" stroke="#8a8a8a" stroke-width="1.4"/></svg>
<svg class="a" style="left:67px;top:194px" width="14" height="13" viewBox="0 0 14 13"><rect x="0.5" y="6.5" width="7" height="6.5" fill="#c8a020"/><rect x="1.3" y="8.5" width="2.2" height="4" fill="#fbeaa0"/><rect x="4.5" y="8.5" width="2.2" height="4" fill="#fbeaa0"/><path d="M9.6,0.3 L10.6,2 L12.4,1.6 L12.3,3.5 L14,4.5 L12.3,5.5 L12.4,7.4 L10.6,7 L9.6,8.7 L8.6,7 L6.8,7.4 L6.9,5.5 L5.2,4.5 L6.9,3.5 L6.8,1.6 L8.6,2 Z" fill="#fcc840" stroke="#8a5a30" stroke-width="0.8"/><circle cx="9.6" cy="4.5" r="1" fill="#fff"/></svg>
<svg class="a" style="left:52px;top:215px" width="7" height="10" viewBox="0 0 7 10"><path d="M1,1 L5,5 L1,9" fill="none" stroke="#8a8a8a" stroke-width="1.4"/></svg>
<svg class="a" style="left:67px;top:214px" width="14" height="13" viewBox="0 0 14 13"><rect x="0.5" y="6.5" width="7" height="6.5" fill="#c8a020"/><rect x="1.3" y="8.5" width="2.2" height="4" fill="#fbeaa0"/><rect x="4.5" y="8.5" width="2.2" height="4" fill="#fbeaa0"/><path d="M9.6,0.3 L10.6,2 L12.4,1.6 L12.3,3.5 L14,4.5 L12.3,5.5 L12.4,7.4 L10.6,7 L9.6,8.7 L8.6,7 L6.8,7.4 L6.9,5.5 L5.2,4.5 L6.9,3.5 L6.8,1.6 L8.6,2 Z" fill="#fcc840" stroke="#8a5a30" stroke-width="0.8"/><circle cx="9.6" cy="4.5" r="1" fill="#fff"/></svg>
<svg class="a" style="left:52px;top:235px" width="7" height="10" viewBox="0 0 7 10"><path d="M1,1 L5,5 L1,9" fill="none" stroke="#8a8a8a" stroke-width="1.4"/></svg>
<svg class="a" style="left:67px;top:234px" width="14" height="13" viewBox="0 0 14 13"><rect x="0.5" y="6.5" width="7" height="6.5" fill="#c8a020"/><rect x="1.3" y="8.5" width="2.2" height="4" fill="#fbeaa0"/><rect x="4.5" y="8.5" width="2.2" height="4" fill="#fbeaa0"/><path d="M9.6,0.3 L10.6,2 L12.4,1.6 L12.3,3.5 L14,4.5 L12.3,5.5 L12.4,7.4 L10.6,7 L9.6,8.7 L8.6,7 L6.8,7.4 L6.9,5.5 L5.2,4.5 L6.9,3.5 L6.8,1.6 L8.6,2 Z" fill="#fcc840" stroke="#8a5a30" stroke-width="0.8"/><circle cx="9.6" cy="4.5" r="1" fill="#fff"/></svg>
<svg class="a" style="left:47px;top:251px" width="16" height="17" viewBox="0 0 16 17"><rect x="6.5" y="1.5" width="7.5" height="14.5" rx="1" fill="#c4cadb" stroke="#8a8a78"/><rect x="7.5" y="2.5" width="5.5" height="3" fill="#e4e8f0"/><rect x="7.5" y="6.5" width="5.5" height="2" fill="#e4e8f0"/><path d="M7.6,2.6 L9.5,4 L7.6,5.2 Z" fill="#30a050"/><path d="M1,9 L8,12.5 L1,16 Z" fill="#3aa55a" stroke="#1f7a3a" stroke-width="0.8"/></svg>
<svg class="a" style="left:621px;top:162px" width="16" height="11" viewBox="0 0 16 11"><path d="M2.2,0.8 Q0.2,4.8 2.2,8.8 M8.4,0.8 Q10.4,4.8 8.4,8.8" fill="none" stroke="#1f3f6a" stroke-width="1.2"/><path d="M3.6,2.6 L7,6.9 M7,2.6 L3.6,6.9" stroke="#1f3f6a" stroke-width="1.1"/><path d="M11.6,3.7 h3.6 M11.6,5.9 h3.6" stroke="#1f3f6a" stroke-width="1"/></svg>
<svg class="a" style="left:621px;top:182px" width="16" height="11" viewBox="0 0 16 11"><path d="M2.2,0.8 Q0.2,4.8 2.2,8.8 M8.4,0.8 Q10.4,4.8 8.4,8.8" fill="none" stroke="#1f3f6a" stroke-width="1.2"/><path d="M3.6,2.6 L7,6.9 M7,2.6 L3.6,6.9" stroke="#1f3f6a" stroke-width="1.1"/><path d="M11.6,3.7 h3.6 M11.6,5.9 h3.6" stroke="#1f3f6a" stroke-width="1"/></svg>
<svg class="a" style="left:10px;top:303px" width="12" height="14" viewBox="0 0 12 14"><path d="M0.5,0.5 L7,0.5 L10.5,4 L10.5,13.5 L0.5,13.5 Z" fill="#eef4fb" stroke="#a89060"/><text x="2" y="11" font-family="Liberation Sans" font-weight="bold" font-size="8.5" fill="#2a5a9a">.c</text></svg>
<svg class="a" style="left:136px;top:305px" width="10" height="10" viewBox="0 0 10 10"><path d="M0.5,2.8 L2.8,0.5 L5,2.7 L7.2,0.5 L9.5,2.8 L7.3,5 L9.5,7.2 L7.2,9.5 L5,7.3 L2.8,9.5 L0.5,7.2 L2.7,5 Z" fill="#fff" stroke="#3c3c3c" stroke-width="1.1" stroke-linejoin="miter"/></svg>
<svg class="a" style="left:839px;top:304px" width="10" height="4" viewBox="0 0 10 4"><rect x="0.5" y="0.5" width="9" height="3" fill="#fff" stroke="#5a5a5a"/></svg>
<svg class="a" style="left:862px;top:304px" width="10" height="10" viewBox="0 0 10 10"><rect x="0.5" y="0.5" width="9" height="9" fill="#fff" stroke="#5a5a5a"/><rect x="1" y="1" width="8" height="1.5" fill="#5a5a5a"/></svg>
<svg class="a" style="left:6px;top:372px" width="8" height="9" viewBox="0 0 8 9"><path d="M0.5,2.5 L3.5,2.5 L3.5,0.5 L7.5,4.5 L3.5,8.5 L3.5,6.5 L0.5,6.5 Z" fill="#6a9ad0" stroke="#1f5aa0" stroke-width="1"/></svg>
<svg class="a" style="left:121px;top:365px" width="45" height="4" viewBox="0 0 45 4"><path d="M0.5,3.5 l2,-2.5 l2,2.5 l2,-2.5 l2,2.5 l2,-2.5 l2,2.5 l2,-2.5 l2,2.5 l2,-2.5 l2,2.5 l2,-2.5 l2,2.5 l2,-2.5 l2,2.5 l2,-2.5 l2,2.5 l2,-2.5 l2,2.5 l2,-2.5 l2,2.5 l2,-2.5 l2,2.5" fill="none" stroke="#f06a3a" stroke-width="1"/></svg>
<div class="a" style="left:853px;top:324px;width:29px;height:212px;background:#f0f0f0"></div>
<div class="a" style="left:853px;top:393px;width:15px;height:125px;background:#cdcdcd"></div>
<svg class="a" style="left:857px;top:330px" width="8" height="6" viewBox="0 0 8 6"><path d="M0.8,5.2 L4,1.6 L7.2,5.2" fill="none" stroke="#505050" stroke-width="1.7"/></svg>
<svg class="a" style="left:857px;top:523px" width="8" height="6" viewBox="0 0 8 6"><path d="M0.8,0.8 L4,4.4 L7.2,0.8" fill="none" stroke="#505050" stroke-width="1.7"/></svg>
<div class="a" style="left:871px;top:427px;width:9px;height:5px;border:1px solid #b8dca0;box-sizing:border-box;background:#f4faf0"></div>
<svg class="a" style="left:47px;top:540px" width="6" height="8" viewBox="0 0 6 8"><path d="M5,0.8 L1.5,4 L5,7.2" fill="none" stroke="#b8b8b8" stroke-width="2.2"/></svg>
<svg class="a" style="left:841px;top:540px" width="6" height="8" viewBox="0 0 6 8"><path d="M1,0.8 L4.5,4 L1,7.2" fill="none" stroke="#b8b8b8" stroke-width="2.2"/></svg>
<svg class="a" style="left:893px;top:302px" width="16" height="15" viewBox="0 0 16 15"><rect x="0.5" y="0.5" width="5" height="5" fill="#dceafa" stroke="#1f6ab8"/><rect x="0.5" y="8.5" width="5" height="5" fill="#dceafa" stroke="#1f6ab8"/><path d="M7,3 h6 M7,11 h6 M12,7 h2" stroke="#1f6ab8" stroke-width="1"/><rect x="8" y="6" width="2.5" height="2.5" fill="none" stroke="#1f6ab8" stroke-width="0.8"/></svg>
<svg class="a" style="left:962px;top:305px" width="10" height="10" viewBox="0 0 10 10"><path d="M0.5,2.8 L2.8,0.5 L5,2.7 L7.2,0.5 L9.5,2.8 L7.3,5 L9.5,7.2 L7.2,9.5 L5,7.3 L2.8,9.5 L0.5,7.2 L2.7,5 Z" fill="#fff" stroke="#3c3c3c" stroke-width="1.1" stroke-linejoin="miter"/></svg>
<svg class="a" style="left:1137px;top:304px" width="10" height="4" viewBox="0 0 10 4"><rect x="0.5" y="0.5" width="9" height="3" fill="#fff" stroke="#5a5a5a"/></svg>
<svg class="a" style="left:1160px;top:304px" width="10" height="10" viewBox="0 0 10 10"><rect x="0.5" y="0.5" width="9" height="9" fill="#fff" stroke="#5a5a5a"/><rect x="1" y="1" width="8" height="1.5" fill="#5a5a5a"/></svg>
<svg class="a" style="left:997px;top:329px" width="15" height="13" viewBox="0 0 15 13"><circle cx="4" cy="3.5" r="3" fill="#d0d0d0"/><circle cx="10.5" cy="5.5" r="3.2" fill="#c4c4c4"/><circle cx="4.5" cy="9.5" r="3.2" fill="#b0b0b0"/></svg>
<svg class="a" style="left:1021px;top:328px" width="14" height="14" viewBox="0 0 14 14"><rect x="0.5" y="0.5" width="10" height="10" fill="#eaeaea" stroke="#a8b4c4"/><rect x="3.5" y="3.5" width="10" height="10" fill="#f2f2f2" stroke="#8a9ab0"/><path d="M5.5,9 h6" stroke="#2a4a8a" stroke-width="1.3"/></svg>
<svg class="a" style="left:1042px;top:326px" width="17" height="17" viewBox="0 0 17 17"><path d="M2.5,3 V14 M0.5,12 L2.5,14.5 L4.5,12" fill="none" stroke="#555" stroke-width="1"/><text x="5" y="8.5" font-family="Liberation Sans" font-weight="bold" font-size="11" fill="#2a8a6a">a</text><text x="8.5" y="16.5" font-family="Liberation Sans" font-weight="bold" font-size="11" fill="#8a2a9a">z</text></svg>
<svg class="a" style="left:1066px;top:328px" width="15" height="14" viewBox="0 0 15 14"><circle cx="7" cy="7" r="5.5" fill="#5aa8e0" stroke="#2a78c0"/><circle cx="7" cy="7" r="2.5" fill="#d8eefa"/><path d="M1,0.5 L14,13.5" stroke="#1a3a8a" stroke-width="1.2"/></svg>
<svg class="a" style="left:1089px;top:326px" width="14" height="16" viewBox="0 0 14 16"><circle cx="5" cy="10" r="3.2" fill="#9a9a9a" stroke="#666"/><path d="M0.5,5 L10.5,15.5" stroke="#1a3a8a" stroke-width="1.1"/><text x="8" y="8" font-family="Liberation Sans" font-size="9" fill="#d01a3a">S</text></svg>
<svg class="a" style="left:1115px;top:331px" width="8" height="8" viewBox="0 0 8 8"><circle cx="4" cy="4" r="3.7" fill="#4aa84a" stroke="#2a7a3a" stroke-width="0.6"/></svg>
<svg class="a" style="left:1135px;top:328px" width="15" height="14" viewBox="0 0 15 14"><path d="M4.5,0.5 V13.5 M9.5,0.5 V13.5 M0.5,4.5 H13.5 M0.5,9.5 H13.5" stroke="#000" stroke-width="2"/><path d="M1,0.5 L14,13.5" stroke="#666" stroke-width="1"/></svg>
<svg class="a" style="left:1166px;top:330px" width="11" height="6" viewBox="0 0 11 6"><path d="M0.5,0.5 L10.5,0.5 L5.5,5.5 Z" fill="#fff" stroke="#555" stroke-width="1"/></svg>
<svg class="a" style="left:923px;top:351px" width="11" height="10" viewBox="0 0 11 10"><rect x="0" y="0" width="4" height="4" fill="#2a6ab8"/><rect x="6" y="0" width="5" height="10" fill="#2a6ab8"/><rect x="0" y="6" width="11" height="4" fill="#2a6ab8"/><rect x="1" y="1" width="2" height="2" fill="#6aa0e0"/></svg>
<svg class="a" style="left:923px;top:371px" width="11" height="10" viewBox="0 0 11 10"><rect x="0" y="0" width="4" height="4" fill="#2a6ab8"/><rect x="6" y="0" width="5" height="10" fill="#2a6ab8"/><rect x="0" y="6" width="11" height="4" fill="#2a6ab8"/><rect x="1" y="1" width="2" height="2" fill="#6aa0e0"/></svg>
<svg class="a" style="left:924px;top:392px" width="9" height="9" viewBox="0 0 9 9"><circle cx="4.5" cy="4.5" r="4" fill="#4aa84a" stroke="#fff" stroke-width="0.8"/></svg>
<svg class="a" style="left:9px;top:564px" width="13" height="13" viewBox="0 0 13 13"><rect x="0.5" y="0.5" width="12" height="9" rx="1" fill="#fff" stroke="#2a5aa0" stroke-width="1.2"/><path d="M3,3.5 h6 M3,5.8 h5" stroke="#2a5aa0" stroke-width="0.9"/><path d="M5.5,10 h2 v1.2 h3 v1.3 h-8 v-1.3 h3 Z" fill="#2a5aa0"/></svg>
<svg class="a" style="left:82px;top:566px" width="10" height="10" viewBox="0 0 10 10"><path d="M0.5,2.8 L2.8,0.5 L5,2.7 L7.2,0.5 L9.5,2.8 L7.3,5 L9.5,7.2 L7.2,9.5 L5,7.3 L2.8,9.5 L0.5,7.2 L2.7,5 Z" fill="#fff" stroke="#3c3c3c" stroke-width="1.1" stroke-linejoin="miter"/></svg>
<svg class="a" style="left:117px;top:563px" width="15" height="15" viewBox="0 0 15 15"><rect x="3.5" y="2.5" width="10" height="11.5" rx="1" fill="#f4eed8" stroke="#b09050"/><rect x="6" y="0.5" width="5" height="3" fill="#b0b8c8"/><path d="M7,7 h5 M7,9 h5 M8,11 h4" stroke="#5a7ab0" stroke-width="0.8"/><path d="M0.5,9 L3,12 L8,5" fill="none" stroke="#1f7ae0" stroke-width="1.8"/></svg>
<svg class="a" style="left:178px;top:563px" width="15" height="15" viewBox="0 0 15 15"><rect x="0.5" y="0.5" width="13" height="14" fill="#eef2f8" stroke="#8a9ab8"/><path d="M7,0.5 V14.5 M0.5,7.5 H7" stroke="#8a9ab8"/><circle cx="3.8" cy="4" r="2.3" fill="#e02020"/><path d="M1.5,12.5 L3.8,9 L6,12.5 Z" fill="#f0a020"/></svg>
<svg class="a" style="left:262px;top:563px" width="15" height="15" viewBox="0 0 15 15"><circle cx="7.5" cy="7.5" r="6.8" fill="#3a78c0" stroke="#1f4f90"/><circle cx="7.5" cy="7.5" r="5.2" fill="#5a9ad8"/><path d="M5.5,4 L11,7.5 L5.5,11 Z" fill="#fff"/></svg>
<svg class="a" style="left:361px;top:563px" width="11" height="15" viewBox="0 0 11 15"><rect x="0.5" y="1.5" width="9" height="13" rx="4" fill="#5a9ad8" stroke="#2a5aa0"/><rect x="2.5" y="4" width="2" height="8" fill="#d0e4f8"/></svg>
<svg class="a" style="left:811px;top:566px" width="12" height="12" viewBox="0 0 12 12"><rect x="0.5" y="0.5" width="10.5" height="10.5" rx="1.5" fill="#e8303a" stroke="#c8202a"/></svg>
<svg class="a" style="left:832px;top:564px" width="15" height="15" viewBox="0 0 15 15"><path d="M1.5,3.5 L3.5,1.5 L7.5,5.5 L11.5,1.5 L13.5,3.5 L9.5,7.5 L13.5,11.5 L11.5,13.5 L7.5,9.5 L3.5,13.5 L1.5,11.5 L5.5,7.5 Z" fill="#b4b4b4" stroke="#a4a4a4" stroke-width="0.6"/></svg>
<svg class="a" style="left:855px;top:563px" width="16" height="16" viewBox="0 0 16 16"><path d="M1,3 L3,1 L6.5,4.5 L10,1 L12,3 L8.5,6.5 L12,10 L10,12 L6.5,8.5 L3,12 L1,10 L4.5,6.5 Z" fill="#e6e6e6" stroke="#c8c8c8" stroke-width="0.8"/><path d="M4,6 L6,4 L9,7 L12,4 L14,6 L11,9 L14,12 L12,14 L9,11 L6,14 L4,12 L7,9 Z" fill="#b4b4b4" stroke="#a0a0a0" stroke-width="0.6"/></svg>
<div class="a" style="left:876px;top:562px;width:1px;height:18px;background:#8c8c8c"></div>
<svg class="a" style="left:886px;top:564px" width="16" height="15" viewBox="0 0 16 15"><path d="M0.5,0.5 L7,0.5 L10.5,4 L10.5,13.5 L0.5,13.5 Z" fill="#f4f6fa" stroke="#8a9ab8"/><path d="M2.5,4 h5 M2.5,6 h6 M2.5,8 h6 M2.5,10 h6" stroke="#4a6aa0" stroke-width="0.8"/><path d="M9,9 L14,14 M14,9 L9,14" stroke="#555" stroke-width="1.6"/></svg>
<svg class="a" style="left:909px;top:563px" width="16" height="16" viewBox="0 0 16 16"><rect x="7.5" y="0.5" width="7" height="14" fill="#f4f6fa" stroke="#8a9ab8"/><path d="M11,3 v2 M11,8 v2" stroke="#3a5a9a" stroke-width="1.5"/><rect x="0.5" y="8.5" width="7" height="6" fill="#e8c040" stroke="#a07818"/><path d="M2,8.5 v-2 a2,2 0 0 1 4,0 v2" fill="none" stroke="#a07818" stroke-width="1.2"/></svg>
<svg class="a" style="left:932px;top:563px" width="15" height="15" viewBox="0 0 15 15"><path d="M0.5,0.5 L7,0.5 L10.5,4 L10.5,13.5 L0.5,13.5 Z" fill="#fbf4dc" stroke="#b09050"/><path d="M2.5,4 h5 M2.5,6 h5 M2.5,8 h4" stroke="#5a7ab0" stroke-width="0.8"/><path d="M13.5,3 V9.5 H6 M8,7.5 L6,9.5 L8,11.5" fill="none" stroke="#d0a030" stroke-width="1.4"/></svg>
<svg class="a" style="left:955px;top:564px" width="16" height="15" viewBox="0 0 16 15"><rect x="3.5" y="0.5" width="11" height="8" fill="#eef4fb" stroke="#3a6aa8"/><path d="M5.5,3 h7 M5.5,5 h6" stroke="#3a6aa8" stroke-width="0.8"/><rect x="0.5" y="5.5" width="8" height="6" fill="#eef4fb" stroke="#3a6aa8"/><path d="M2.5,13.5 h4 M4.5,11.5 v2" stroke="#3a6aa8" stroke-width="1.2"/></svg>
<svg class="a" style="left:977px;top:564px" width="16" height="15" viewBox="0 0 16 15"><rect x="3.5" y="0.5" width="11" height="8" fill="#eef4fb" stroke="#3a6aa8"/><path d="M5.5,3 h7 M5.5,5 h6" stroke="#3a6aa8" stroke-width="0.8"/><rect x="0.5" y="5.5" width="8" height="6" fill="#eef4fb" stroke="#3a6aa8"/><path d="M2.5,13.5 h4 M4.5,11.5 v2" stroke="#3a6aa8" stroke-width="1.2"/><path d="M8,2 L11,5 M11,2 L8,5" stroke="#e02020" stroke-width="1.3"/></svg>
<div class="a" style="left:999px;top:562px;width:1px;height:18px;background:#8c8c8c"></div>
<svg class="a" style="left:1010px;top:563px" width="15" height="16" viewBox="0 0 15 16"><rect x="0.5" y="5.5" width="12" height="9" fill="#e4f0fa" stroke="#6a8ab8"/><rect x="1" y="6" width="11" height="2" fill="#3d78c9"/><path d="M5,11 L11,4" stroke="#1a3a6a" stroke-width="1"/><path d="M9,2 L12,0.5 L14.5,3 L12,6 Z" fill="#30a040" stroke="#1a6a2a" stroke-width="0.6"/></svg>
<svg class="a" style="left:1033px;top:563px" width="16" height="15" viewBox="0 0 16 15"><rect x="0.5" y="0.5" width="14" height="10" rx="1" fill="#2a5aa0"/><rect x="2" y="2" width="11" height="7" fill="#eef4fb"/><path d="M4,4.5 h7 M4,6.5 h5" stroke="#2a5aa0" stroke-width="0.9"/><path d="M6,11 h3 v1.5 h3 v1.5 h-9 v-1.5 h3 Z" fill="#2a5aa0"/></svg>
<svg class="a" style="left:1055px;top:569px" width="8" height="4" viewBox="0 0 8 4"><path d="M0,0 L8,0 L4,4 Z" fill="#111"/></svg>
<svg class="a" style="left:1072px;top:563px" width="17" height="16" viewBox="0 0 17 16"><rect x="0.5" y="4.5" width="13" height="11" fill="#fdf6da" stroke="#8a7a4a"/><rect x="1" y="5" width="12" height="2" fill="#3d78c9"/><path d="M12,0.5 L13,3 L15.5,3.5 L13,4.5 L12,7 L11,4.5 L8.5,3.5 L11,3 Z" fill="#f5d96a" stroke="#b48f1e" stroke-width="0.6"/></svg>
<svg class="a" style="left:1095px;top:569px" width="8" height="4" viewBox="0 0 8 4"><path d="M0,0 L8,0 L4,4 Z" fill="#111"/></svg>
<svg class="a" style="left:1111px;top:563px" width="17" height="16" viewBox="0 0 17 16"><path d="M1,13 L9,1.5 L14,4 L6,15 Z" fill="#efe3cc" stroke="#b09a78"/><path d="M6,15 L16,15" stroke="#b09a78" stroke-width="1"/></svg>
<svg class="a" style="left:1137px;top:565px" width="10" height="4" viewBox="0 0 10 4"><rect x="0.5" y="0.5" width="9" height="3" fill="#fff" stroke="#5a5a5a"/></svg>
<svg class="a" style="left:1160px;top:565px" width="10" height="10" viewBox="0 0 10 10"><rect x="0.5" y="0.5" width="9" height="9" fill="#fff" stroke="#5a5a5a"/><rect x="1" y="1" width="8" height="1.5" fill="#5a5a5a"/></svg>
<div class="a" style="left:1164px;top:603px;width:16px;height:94px;background:#f0f0f0"></div>
<svg class="a" style="left:1168px;top:612px" width="9" height="6" viewBox="0 0 9 6"><path d="M0.8,5.2 L4.5,1.6 L8.2,5.2" fill="none" stroke="#c0c0c0" stroke-width="2.1"/></svg>
<svg class="a" style="left:1168px;top:683px" width="9" height="6" viewBox="0 0 9 6"><path d="M0.8,0.8 L4.5,4.4 L8.2,0.8" fill="none" stroke="#c0c0c0" stroke-width="2.1"/></svg>
<svg class="a" style="left:11px;top:700px" width="6" height="8" viewBox="0 0 6 8"><path d="M5,0.8 L1.5,4 L5,7.2" fill="none" stroke="#c0c0c0" stroke-width="2.2"/></svg>
<svg class="a" style="left:1153px;top:700px" width="6" height="8" viewBox="0 0 6 8"><path d="M1,0.8 L4.5,4 L1,7.2" fill="none" stroke="#c0c0c0" stroke-width="2.2"/></svg>
<div class="a" style="left:598px;top:175px;width:582px;height:1px;background:#e6e6e6"></div>
<div class="a" style="left:598px;top:195px;width:582px;height:1px;background:#e6e6e6"></div>
<div class="a" style="left:598px;top:215px;width:582px;height:1px;background:#e6e6e6"></div>
<div class="a" style="left:598px;top:235px;width:582px;height:1px;background:#e6e6e6"></div>
<div class="a" style="left:791px;top:132px;width:1px;height:106px;background:#e6e6e6"></div>
<div class="a" style="left:985px;top:132px;width:1px;height:106px;background:#e6e6e6"></div>
<svg class="a" style="left:1168px;top:248px" width="9" height="6" viewBox="0 0 9 6"><path d="M0.8,5.2 L4.5,1.6 L8.2,5.2" fill="none" stroke="#c0c0c0" stroke-width="2.1"/></svg>
<svg class="a" style="left:1168px;top:264px" width="9" height="6" viewBox="0 0 9 6"><path d="M0.8,0.8 L4.5,4.4 L8.2,0.8" fill="none" stroke="#c0c0c0" stroke-width="2.1"/></svg>
<svg class="a" style="left:603px;top:279px" width="6" height="8" viewBox="0 0 6 8"><path d="M5,0.8 L1.5,4 L5,7.2" fill="none" stroke="#c0c0c0" stroke-width="2.2"/></svg>
<svg class="a" style="left:1152px;top:279px" width="6" height="8" viewBox="0 0 6 8"><path d="M1,0.8 L4.5,4 L1,7.2" fill="none" stroke="#c0c0c0" stroke-width="2.2"/></svg>
<svg class="a" style="left:950px;top:59px" width="17" height="17" viewBox="0 0 17 17"><path d="M3,4 L0.5,3 M2.5,8 L0,8.5 M4,12 L2,14.5 M7,2.5 L6,0 M11,3 L13.5,1.5 M13,7 L15.5,7.5 M12,11 L14.5,12.5 M8.5,13.5 L8,16" stroke="#1f3a2a" stroke-width="1.3"/><ellipse cx="8" cy="8" rx="3.6" ry="5.6" transform="rotate(-40 8 8)" fill="#a8d08a" stroke="#2f5a3a" stroke-width="1"/><path d="M6,6 L10,10 M5.5,8.5 L8,11" stroke="#7aa860" stroke-width="0.8"/><circle cx="5" cy="4.5" r="1.6" fill="#2f5a3a"/></svg>
<svg class="a" style="left:1019px;top:60px" width="17" height="17" viewBox="0 0 17 17"><rect x="0.5" y="0.5" width="15.5" height="15.5" fill="#fff" stroke="#9aa060" stroke-dasharray="2 1"/><path d="M5.5,2.5 L8.5,6.5 L8,9 L5.5,8 Z" fill="#c8d040"/><path d="M2.5,13 L5.5,8 L6.5,11 Z" fill="#7a8a20"/><path d="M2.5,13 L3,9 L5.5,8 L6,11 Z" fill="#8a9a28"/><path d="M6.5,11 L8.5,9 L13,11.5 L9.5,13 Z" fill="#e0e890"/></svg>
<svg class="a" style="left:1103px;top:62px" width="17" height="10" viewBox="0 0 17 10"><circle cx="3.5" cy="6" r="2.6" fill="none" stroke="#28497a" stroke-width="1.2"/><circle cx="10" cy="6" r="2.6" fill="none" stroke="#28497a" stroke-width="1.2"/><path d="M6,6 Q6.8,4.5 7.5,6 M1,5 L3.5,1 M12.5,5 Q13,1.5 16,1" fill="none" stroke="#28497a" stroke-width="1.1"/></svg>
<div class="a" style="left:1182px;top:52px;width:1px;height:31px;background:#d8d8d8"></div>
<svg class="a" style="left:900px;top:721px" width="2" height="16" viewBox="0 0 2 16"><rect x="0" y="0" width="2" height="2" fill="#a8a390"/><rect x="0" y="5" width="2" height="2" fill="#a8a390"/><rect x="0" y="10" width="2" height="2" fill="#a8a390"/><rect x="0" y="15" width="2" height="2" fill="#a8a390"/></svg>
<div class="a" style="left:602px;top:716px;width:1px;height:22px;background:#a0a0a0"></div>
<div class="a" style="left:706px;top:716px;width:1px;height:22px;background:#a0a0a0"></div>
<div class="a" style="left:804px;top:716px;width:1px;height:22px;background:#a0a0a0"></div>
</body></html>
